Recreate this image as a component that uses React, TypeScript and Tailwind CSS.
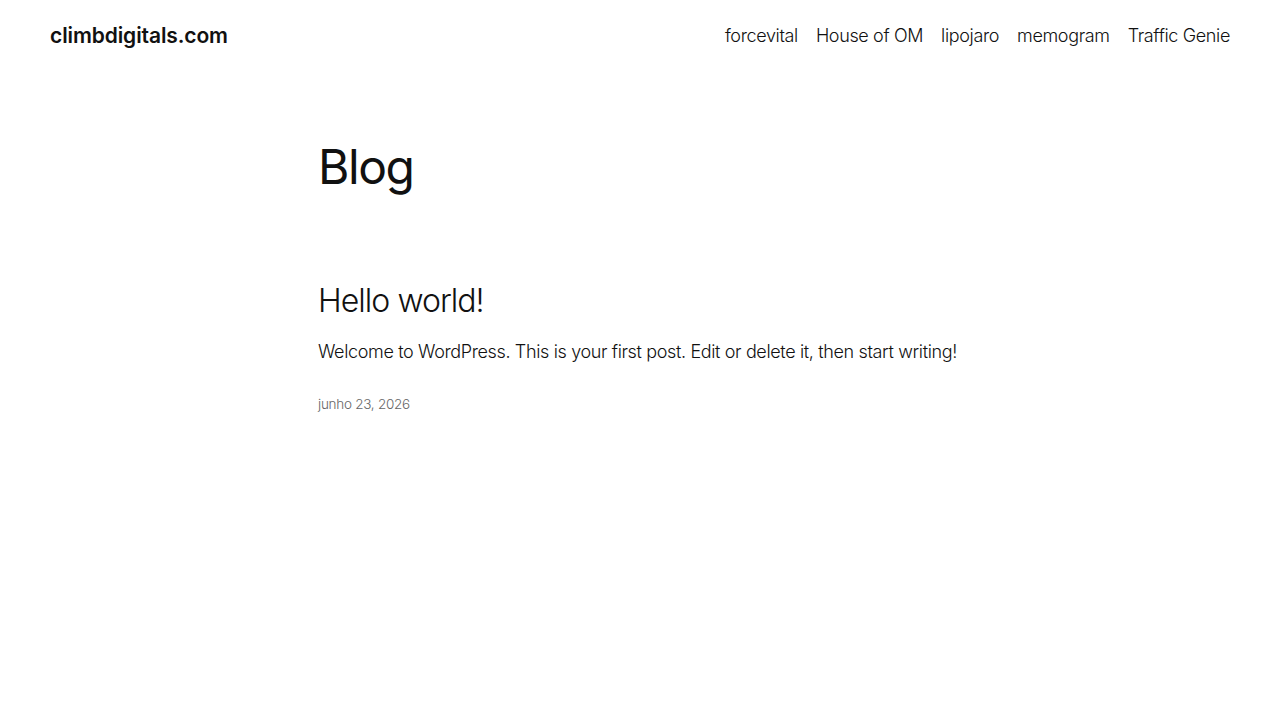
const NAV = ["forcevital", "House of OM", "lipojaro", "memogram", "Traffic Genie"]

export default function App() {
  return (
    <div
      className="min-h-screen bg-white text-[#111111]"
      style={{ fontFamily: 'Inter, "Noto Sans", sans-serif' }}
    >
      {/* Header */}
      <header className="flex items-center justify-between px-[50px] pt-[20px] pb-[20px]">
        <a href="#" className="text-[21px] font-semibold tracking-[-0.005em]">
          climbdigitals.com
        </a>
        <nav className="flex gap-[18px] text-[18px] font-light tracking-[-0.02em]">
          {NAV.map((item) => (
            <a key={item} href="#">
              {item}
            </a>
          ))}
        </nav>
      </header>

      {/* Main */}
      <main className="mx-auto w-[644px] pt-[66px]">
        <h1 className="text-[48px] font-normal leading-[1.2] tracking-[-0.03em]">Blog</h1>

        <article className="mt-[87px]">
          <h2 className="text-[32px] font-light leading-[1.2] tracking-[-0.03em]">
            <a href="#">Hello world!</a>
          </h2>
          <p className="mt-[18px] text-[18px] font-light leading-[1.6] tracking-[-0.02em]">
            Welcome to WordPress. This is your first post. Edit or delete it, then start writing!
          </p>
          <p className="mt-[27px] text-[13.5px] font-light tracking-[-0.02em] text-[#666666]">
            junho 23, 2026
          </p>
        </article>
      </main>
    </div>
  )
}
